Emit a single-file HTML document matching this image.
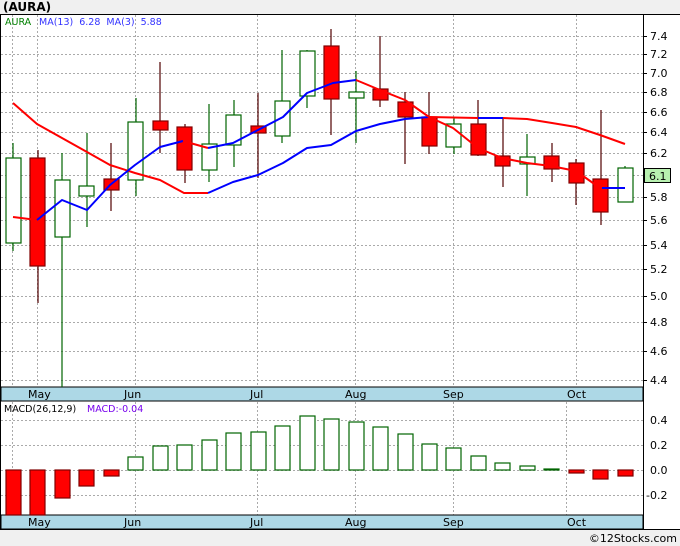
<!DOCTYPE html>
<html><head><style>
html,body{margin:0;padding:0;background:#fff;}
svg{display:block;font-family:"DejaVu Sans","Liberation Sans",sans-serif;}
</style></head><body>
<svg width="680" height="546" viewBox="0 0 680 546" xmlns="http://www.w3.org/2000/svg">
<rect x="0" y="0" width="680" height="546" fill="#fff"/>
<rect x="0" y="0" width="680" height="14" fill="#f0f0f0"/>
<text x="3" y="11" font-size="12" font-weight="bold" fill="#000">(AURA)</text>
<rect x="0" y="530" width="680" height="16" fill="#f0f0f0"/>
<text x="677" y="542" font-size="11" text-anchor="end" fill="#000">©12Stocks.com</text>
<line x1="0" y1="14.5" x2="680" y2="14.5" stroke="#000"/>
<line x1="0.5" y1="14" x2="0.5" y2="530" stroke="#000"/>
<line x1="643.5" y1="14" x2="643.5" y2="530" stroke="#000"/>
<line x1="0" y1="529.5" x2="680" y2="529.5" stroke="#000"/>
<g stroke="#aaa" stroke-dasharray="2,2" stroke-width="1">
<line x1="1" y1="36.5" x2="643" y2="36.5"/><line x1="1" y1="54.5" x2="643" y2="54.5"/><line x1="1" y1="73.5" x2="643" y2="73.5"/><line x1="1" y1="92.5" x2="643" y2="92.5"/><line x1="1" y1="112.5" x2="643" y2="112.5"/><line x1="1" y1="132.5" x2="643" y2="132.5"/><line x1="1" y1="153.5" x2="643" y2="153.5"/><line x1="1" y1="175.5" x2="643" y2="175.5"/><line x1="1" y1="197.5" x2="643" y2="197.5"/><line x1="1" y1="220.5" x2="643" y2="220.5"/><line x1="1" y1="245.5" x2="643" y2="245.5"/><line x1="1" y1="269.5" x2="643" y2="269.5"/><line x1="1" y1="296.5" x2="643" y2="296.5"/><line x1="1" y1="322.5" x2="643" y2="322.5"/><line x1="1" y1="351.5" x2="643" y2="351.5"/><line x1="1" y1="380.5" x2="643" y2="380.5"/>
<line x1="12.5" y1="15" x2="12.5" y2="387"/><line x1="37.5" y1="15" x2="37.5" y2="387"/><line x1="135.5" y1="15" x2="135.5" y2="387"/><line x1="257.5" y1="15" x2="257.5" y2="387"/><line x1="355.5" y1="15" x2="355.5" y2="387"/><line x1="453.5" y1="15" x2="453.5" y2="387"/><line x1="576.5" y1="15" x2="576.5" y2="387"/>
<line x1="1" y1="420.5" x2="643" y2="420.5"/><line x1="1" y1="445.5" x2="643" y2="445.5"/><line x1="1" y1="470.5" x2="643" y2="470.5"/><line x1="1" y1="495.5" x2="643" y2="495.5"/>
<line x1="12.5" y1="402" x2="12.5" y2="515"/><line x1="135.5" y1="402" x2="135.5" y2="515"/><line x1="257.5" y1="402" x2="257.5" y2="515"/><line x1="355.5" y1="402" x2="355.5" y2="515"/><line x1="453.5" y1="402" x2="453.5" y2="515"/><line x1="566.5" y1="402" x2="566.5" y2="515"/>
</g>
<rect x="1" y="387" width="642" height="14" fill="#add8e6" stroke="#000"/>
<rect x="1" y="515" width="642" height="14" fill="#add8e6" stroke="#000"/>
<g font-size="11" fill="#000">
<text x="28" y="398">May</text><text x="124" y="398">Jun</text><text x="250" y="398">Jul</text><text x="345" y="398">Aug</text><text x="443" y="398">Sep</text><text x="567" y="398">Oct</text>
<text x="28" y="526">May</text><text x="124" y="526">Jun</text><text x="250" y="526">Jul</text><text x="345" y="526">Aug</text><text x="443" y="526">Sep</text><text x="567" y="526">Oct</text>
</g>
<g font-size="11" fill="#000">
<text x="650" y="40">7.4</text><text x="650" y="58">7.2</text><text x="650" y="77">7.0</text><text x="650" y="96">6.8</text><text x="650" y="116">6.6</text><text x="650" y="136">6.4</text><text x="650" y="157">6.2</text><text x="650" y="201">5.8</text><text x="650" y="224">5.6</text><text x="650" y="249">5.4</text><text x="650" y="273">5.2</text><text x="650" y="300">5.0</text><text x="650" y="326">4.8</text><text x="650" y="355">4.6</text><text x="650" y="384">4.4</text>
<text x="650" y="424">0.4</text><text x="650" y="449">0.2</text><text x="650" y="474">0.0</text><text x="646" y="499">-0.2</text>
</g>
<g stroke="#000">
<line x1="643" y1="36.5" x2="647" y2="36.5"/><line x1="643" y1="54.5" x2="647" y2="54.5"/><line x1="643" y1="73.5" x2="647" y2="73.5"/><line x1="643" y1="92.5" x2="647" y2="92.5"/><line x1="643" y1="112.5" x2="647" y2="112.5"/><line x1="643" y1="132.5" x2="647" y2="132.5"/><line x1="643" y1="153.5" x2="647" y2="153.5"/><line x1="643" y1="197.5" x2="647" y2="197.5"/><line x1="643" y1="220.5" x2="647" y2="220.5"/><line x1="643" y1="245.5" x2="647" y2="245.5"/><line x1="643" y1="269.5" x2="647" y2="269.5"/><line x1="643" y1="296.5" x2="647" y2="296.5"/><line x1="643" y1="322.5" x2="647" y2="322.5"/><line x1="643" y1="351.5" x2="647" y2="351.5"/><line x1="643" y1="380.5" x2="647" y2="380.5"/>
</g>
<rect x="644.5" y="168.5" width="26" height="14" fill="#b8f0b0" stroke="#000"/>
<text x="649" y="180" font-size="11" fill="#000">6.1</text>
<text x="5" y="25" font-size="9.5" fill="#008000">AURA</text>
<text x="39" y="25" font-size="9.5" fill="#3333ff" xml:space="preserve">MA(13)  6.28  MA(3)  5.88</text>
<text x="4" y="412" font-size="9.5" fill="#000">MACD(26,12,9)</text>
<text x="87" y="412" font-size="9.5" fill="#7700ee">MACD:-0.04</text>
<g stroke-width="1.2">
<line x1="13" y1="143" x2="13" y2="251" stroke="#006400"/>
<line x1="38" y1="150" x2="38" y2="303" stroke="#500000"/>
<line x1="62" y1="153" x2="62" y2="387" stroke="#006400"/>
<line x1="87" y1="133" x2="87" y2="227" stroke="#006400"/>
<line x1="111" y1="143" x2="111" y2="211" stroke="#500000"/>
<line x1="136" y1="98" x2="136" y2="196" stroke="#006400"/>
<line x1="160" y1="62" x2="160" y2="153" stroke="#500000"/>
<line x1="185" y1="124" x2="185" y2="183" stroke="#500000"/>
<line x1="209" y1="104" x2="209" y2="182" stroke="#006400"/>
<line x1="234" y1="100" x2="234" y2="167" stroke="#006400"/>
<line x1="258" y1="93" x2="258" y2="178" stroke="#500000"/>
<line x1="282" y1="50" x2="282" y2="143" stroke="#006400"/>
<line x1="307" y1="50" x2="307" y2="108" stroke="#006400"/>
<line x1="331" y1="29" x2="331" y2="135" stroke="#500000"/>
<line x1="356" y1="71" x2="356" y2="143" stroke="#006400"/>
<line x1="380" y1="36" x2="380" y2="107" stroke="#500000"/>
<line x1="405" y1="92" x2="405" y2="164" stroke="#500000"/>
<line x1="429" y1="92" x2="429" y2="154" stroke="#500000"/>
<line x1="454" y1="117" x2="454" y2="154" stroke="#006400"/>
<line x1="478" y1="100" x2="478" y2="156" stroke="#500000"/>
<line x1="503" y1="117" x2="503" y2="187" stroke="#500000"/>
<line x1="527" y1="134" x2="527" y2="196" stroke="#006400"/>
<line x1="552" y1="143" x2="552" y2="182" stroke="#500000"/>
<line x1="576" y1="159" x2="576" y2="205" stroke="#500000"/>
<line x1="601" y1="110" x2="601" y2="225" stroke="#500000"/>
<line x1="625" y1="166" x2="625" y2="202" stroke="#006400"/>
</g>
<g stroke-width="1.2">
<rect x="6" y="158" width="15" height="85" fill="#fff" stroke="#006400"/>
<rect x="30" y="158" width="15" height="108" fill="#f00" stroke="#800000"/>
<rect x="55" y="180" width="15" height="57" fill="#fff" stroke="#006400"/>
<rect x="79" y="186" width="15" height="10" fill="#fff" stroke="#006400"/>
<rect x="104" y="179" width="15" height="11" fill="#f00" stroke="#800000"/>
<rect x="128" y="122" width="15" height="58" fill="#fff" stroke="#006400"/>
<rect x="153" y="121" width="15" height="9" fill="#f00" stroke="#800000"/>
<rect x="177" y="127" width="15" height="43" fill="#f00" stroke="#800000"/>
<rect x="202" y="144" width="15" height="26" fill="#fff" stroke="#006400"/>
<rect x="226" y="115" width="15" height="30" fill="#fff" stroke="#006400"/>
<rect x="251" y="126" width="15" height="7" fill="#f00" stroke="#800000"/>
<rect x="275" y="101" width="15" height="35" fill="#fff" stroke="#006400"/>
<rect x="300" y="51" width="15" height="45" fill="#fff" stroke="#006400"/>
<rect x="324" y="46" width="15" height="53" fill="#f00" stroke="#800000"/>
<rect x="349" y="92" width="15" height="6" fill="#fff" stroke="#006400"/>
<rect x="373" y="89" width="15" height="11" fill="#f00" stroke="#800000"/>
<rect x="398" y="102" width="15" height="15" fill="#f00" stroke="#800000"/>
<rect x="422" y="117" width="15" height="29" fill="#f00" stroke="#800000"/>
<rect x="446" y="124" width="15" height="23" fill="#fff" stroke="#006400"/>
<rect x="471" y="124" width="15" height="31" fill="#f00" stroke="#800000"/>
<rect x="495" y="156" width="15" height="10" fill="#f00" stroke="#800000"/>
<rect x="520" y="157" width="15" height="7" fill="#fff" stroke="#006400"/>
<rect x="544" y="156" width="15" height="13" fill="#f00" stroke="#800000"/>
<rect x="569" y="163" width="15" height="20" fill="#f00" stroke="#800000"/>
<rect x="593" y="179" width="15" height="33" fill="#f00" stroke="#800000"/>
<rect x="618" y="168" width="15" height="34" fill="#fff" stroke="#006400"/>
</g>
<g fill="none" stroke-width="2" stroke-linejoin="round">
<polyline stroke="#f00" points="13,103 37,124 62,138 87,152 110,165 135,173 160,180 184,193 208,193"/>
<polyline stroke="#00f" points="208,193 233,182 258,175 283,163 307,148 331,145 356,131 380,124 405,119 429,117"/>
<polyline stroke="#f00" points="429,117 478,118"/>
<polyline stroke="#00f" points="478,118 503,118"/>
<polyline stroke="#f00" points="503,118 527,119 552,123 576,127 600,135 625,144"/>
<polyline stroke="#f00" points="13,217 37,220"/>
<polyline stroke="#00f" points="37,220 62,200 87,210 110,185 135,165 160,147 183,141"/>
<polyline stroke="#f00" points="183,141 208,148"/>
<polyline stroke="#00f" points="208,148 233,143 258,130 283,117 307,93 333,83 356,80"/>
<polyline stroke="#f00" points="356,80 380,90 405,100 429,117 453,128 478,148 502,158 527,163 551,166 576,171 600,188"/>
<polyline stroke="#00f" points="602,188 625,188"/>
</g>
<g stroke-width="1.2">
<rect x="6" y="470" width="15" height="45" fill="#f00" stroke="#800000"/>
<rect x="30" y="470" width="15" height="45" fill="#f00" stroke="#800000"/>
<rect x="55" y="470" width="15" height="28" fill="#f00" stroke="#800000"/>
<rect x="79" y="470" width="15" height="16" fill="#f00" stroke="#800000"/>
<rect x="104" y="470" width="15" height="6" fill="#f00" stroke="#800000"/>
<rect x="128" y="457" width="15" height="13" fill="#fff" stroke="#006400"/>
<rect x="153" y="446" width="15" height="24" fill="#fff" stroke="#006400"/>
<rect x="177" y="445" width="15" height="25" fill="#fff" stroke="#006400"/>
<rect x="202" y="440" width="15" height="30" fill="#fff" stroke="#006400"/>
<rect x="226" y="433" width="15" height="37" fill="#fff" stroke="#006400"/>
<rect x="251" y="432" width="15" height="38" fill="#fff" stroke="#006400"/>
<rect x="275" y="426" width="15" height="44" fill="#fff" stroke="#006400"/>
<rect x="300" y="416" width="15" height="54" fill="#fff" stroke="#006400"/>
<rect x="324" y="419" width="15" height="51" fill="#fff" stroke="#006400"/>
<rect x="349" y="422" width="15" height="48" fill="#fff" stroke="#006400"/>
<rect x="373" y="427" width="15" height="43" fill="#fff" stroke="#006400"/>
<rect x="398" y="434" width="15" height="36" fill="#fff" stroke="#006400"/>
<rect x="422" y="444" width="15" height="26" fill="#fff" stroke="#006400"/>
<rect x="446" y="448" width="15" height="22" fill="#fff" stroke="#006400"/>
<rect x="471" y="456" width="15" height="14" fill="#fff" stroke="#006400"/>
<rect x="495" y="463" width="15" height="7" fill="#fff" stroke="#006400"/>
<rect x="520" y="466" width="15" height="4" fill="#fff" stroke="#006400"/>
<rect x="544" y="469" width="15" height="1" fill="#fff" stroke="#006400"/>
<rect x="569" y="470" width="15" height="3" fill="#f00" stroke="#800000"/>
<rect x="593" y="470" width="15" height="9" fill="#f00" stroke="#800000"/>
<rect x="618" y="470" width="15" height="6" fill="#f00" stroke="#800000"/>
</g>
</svg>
</body></html>
